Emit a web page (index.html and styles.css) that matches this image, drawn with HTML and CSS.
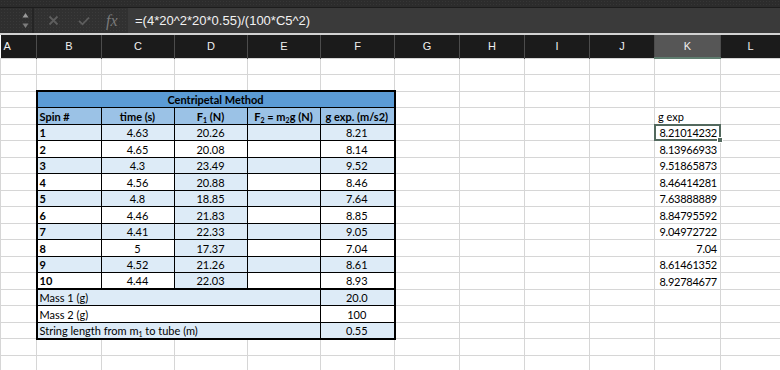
FILE: index.html
```html
<!DOCTYPE html>
<html lang="en">

<head>
    <meta charset="UTF-8">
    <meta name="viewport" content="width=device-width, initial-scale=1.0">
    <title>Centripetal Method</title>
    <link rel="stylesheet" href="styles.css">
</head>

<body>
    <div class="topstrip"></div>
    <div class="formula_bar">
        <div class="namebox">
            <svg width="7" height="18" viewBox="0 0 7 18">
                <path d="M3.5 1 L6.5 5.5 L0.5 5.5 Z" fill="#9a9a9a" />
                <path d="M3.5 16 L6.5 11.5 L0.5 11.5 Z" fill="#7c7c7c" />
            </svg>
        </div>
        <div class="tools">
            <svg class="icon_x" width="11" height="11" viewBox="0 0 11 11">
                <path d="M1.5 1.5 L9.5 9.5 M9.5 1.5 L1.5 9.5" stroke="#5e5e5e" stroke-width="1.8" fill="none" />
            </svg>
            <svg class="icon_check" width="12" height="10" viewBox="0 0 12 10">
                <path d="M1 4.8 L4.5 8.3 L11 1.5" stroke="#5e5e5e" stroke-width="1.8" fill="none" />
            </svg>
            <span class="fx">fx</span>
        </div>
        <div class="formula">=(4*20^2*20*0.55)/(100*C5^2)</div>
    </div>

    <!-- ------------------------------------------------------------------------------------ -->

    <table class="sheet">
        <colgroup>
            <col style="width:36px"><col style="width:65px"><col style="width:73px"><col style="width:73px">
            <col style="width:73px"><col style="width:74px"><col style="width:65px"><col style="width:65px">
            <col style="width:65px"><col style="width:65px"><col style="width:66px"><col style="width:60px">
        </colgroup>
        <thead>
            <tr>
                <th class="col_a">A</th><th>B</th><th>C</th><th>D</th><th>E</th><th>F</th>
                <th>G</th><th>H</th><th>I</th><th>J</th><th class="active">K</th><th>L</th>
            </tr>
        </thead>
        <tbody>
            <tr><td></td><td></td><td></td><td></td><td></td><td></td><td></td><td></td><td></td><td></td><td></td><td></td></tr>
            <tr><td></td><td></td><td></td><td></td><td></td><td></td><td></td><td></td><td></td><td></td><td></td><td></td></tr>
            <tr>
                <td></td>
                <td class="title" colspan="5">Centripetal Method</td>
                <td></td><td></td><td></td><td></td><td></td><td></td>
            </tr>
            <tr>
                <td></td>
                <td class="t l hd">Spin #</td>
                <td class="t hd c">time (s)</td>
                <td class="t hd c">F<sub>1</sub> (N)</td>
                <td class="t hd c">F<sub>2</sub> = m<sub>2</sub>g (N)</td>
                <td class="t r hd c">g exp. (m/s2)</td>
                <td></td><td></td><td></td><td></td><td class="txt">g exp</td><td></td>
            </tr>
            <tr>
                <td></td>
                <td class="t l hl b">1</td><td class="t hl c">4.63</td><td class="t hl c">20.26</td><td class="t hl"></td><td class="t r hl c">8.21</td>
                <td></td><td></td><td></td><td></td><td class="num sel">8.21014232</td><td></td>
            </tr>
            <tr>
                <td></td>
                <td class="t l b">2</td><td class="t c">4.65</td><td class="t c">20.08</td><td class="t"></td><td class="t r c">8.14</td>
                <td></td><td></td><td></td><td></td><td class="num">8.13966933</td><td></td>
            </tr>
            <tr>
                <td></td>
                <td class="t l hl b">3</td><td class="t hl c">4.3</td><td class="t hl c">23.49</td><td class="t hl"></td><td class="t r hl c">9.52</td>
                <td></td><td></td><td></td><td></td><td class="num">9.51865873</td><td></td>
            </tr>
            <tr>
                <td></td>
                <td class="t l b">4</td><td class="t c">4.56</td><td class="t hl c">20.88</td><td class="t"></td><td class="t r c">8.46</td>
                <td></td><td></td><td></td><td></td><td class="num">8.46414281</td><td></td>
            </tr>
            <tr>
                <td></td>
                <td class="t l hl b">5</td><td class="t hl c">4.8</td><td class="t hl c">18.85</td><td class="t hl"></td><td class="t r hl c">7.64</td>
                <td></td><td></td><td></td><td></td><td class="num">7.63888889</td><td></td>
            </tr>
            <tr>
                <td></td>
                <td class="t l b">6</td><td class="t c">4.46</td><td class="t hl c">21.83</td><td class="t"></td><td class="t r c">8.85</td>
                <td></td><td></td><td></td><td></td><td class="num">8.84795592</td><td></td>
            </tr>
            <tr>
                <td></td>
                <td class="t l hl b">7</td><td class="t hl c">4.41</td><td class="t hl c">22.33</td><td class="t hl"></td><td class="t r hl c">9.05</td>
                <td></td><td></td><td></td><td></td><td class="num">9.04972722</td><td></td>
            </tr>
            <tr>
                <td></td>
                <td class="t l b">8</td><td class="t c">5</td><td class="t hl c">17.37</td><td class="t"></td><td class="t r c">7.04</td>
                <td></td><td></td><td></td><td></td><td class="num">7.04</td><td></td>
            </tr>
            <tr>
                <td></td>
                <td class="t l hl b">9</td><td class="t hl c">4.52</td><td class="t hl c">21.26</td><td class="t hl"></td><td class="t r hl c">8.61</td>
                <td></td><td></td><td></td><td></td><td class="num">8.61461352</td><td></td>
            </tr>
            <tr>
                <td></td>
                <td class="t l bot b">10</td><td class="t bot c">4.44</td><td class="t bot hl c">22.03</td><td class="t bot"></td><td class="t r bot c">8.93</td>
                <td></td><td></td><td></td><td></td><td class="num">8.92784677</td><td></td>
            </tr>
            <tr>
                <td></td>
                <td class="t l hl" colspan="4">Mass 1 (g)</td><td class="t r hl c">20.0</td>
                <td></td><td></td><td></td><td></td><td></td><td></td>
            </tr>
            <tr>
                <td></td>
                <td class="t l" colspan="4">Mass 2 (g)</td><td class="t r c">100</td>
                <td></td><td></td><td></td><td></td><td></td><td></td>
            </tr>
            <tr>
                <td></td>
                <td class="t l bot hl" colspan="4">String length from m<sub>1</sub> to tube (m)</td><td class="t r bot hl c">0.55</td>
                <td></td><td></td><td></td><td></td><td></td><td></td>
            </tr>
            <tr><td></td><td></td><td></td><td></td><td></td><td></td><td></td><td></td><td></td><td></td><td></td><td></td></tr>
            <tr><td></td><td></td><td></td><td></td><td></td><td></td><td></td><td></td><td></td><td></td><td></td><td></td></tr>
        </tbody>
    </table>
</body>

</html>
```

FILE: styles.css
```css
body {
    margin: 0;
    width: 780px;
    height: 370px;
    overflow: hidden;
    background: #fff;
    font-family: "Lato", "Liberation Sans", sans-serif;
}

.topstrip {
    height: 7px;
    background-color: #2c2c2c;
    background-image: radial-gradient(#363636 0.6px, transparent 0.8px);
    background-size: 3px 3px;
    border-bottom: 1px solid #1d1d1d;
}

.formula_bar {
    display: flex;
    height: 25px;
    background: #3a3a3a;
    border-bottom: 2px solid #d2d2d2;
}

.namebox {
    width: 34px;
    display: flex;
    align-items: center;
    padding-left: 22px;
    box-sizing: border-box;
    background-color: #2f2f2f;
    background-image: radial-gradient(#393939 0.6px, transparent 0.8px);
    background-size: 3px 3px;
    border-right: 2px solid #252525;
}

.tools {
    width: 94px;
    display: flex;
    align-items: center;
    background-color: #313131;
    background-image: radial-gradient(#3b3b3b 0.6px, transparent 0.8px);
    background-size: 3px 3px;
}

.icon_x {
    margin-left: 14px;
}

.icon_check {
    margin-left: 19px;
}

.fx {
    margin-left: 16px;
    font-family: "Liberation Serif", serif;
    font-style: italic;
    font-size: 16px;
    color: #7a7a7a;
}

.formula {
    flex: 1;
    display: flex;
    align-items: center;
    padding-left: 7px;
    color: #f2f2f2;
    font-family: "Liberation Sans", sans-serif;
    font-size: 13px;
}

/* ---------- sheet ---------- */

.sheet {
    border-collapse: collapse;
    table-layout: fixed;
    width: 780px;
}

.sheet th {
    height: 22px;
    padding: 0;
    background: #1b1b1b;
    color: #f0f0f0;
    font-family: "Liberation Sans", sans-serif;
    font-size: 11px;
    font-weight: normal;
    border-left: 1px solid #4c4c4c;
    border-right: 1px solid #4c4c4c;
}

.sheet th.col_a {
    text-align: left;
    padding-left: 3px;
    border-left: none;
}

.sheet th.active {
    background: #565656;
    border-bottom: 2px solid #5f7d6f;
}

.sheet tbody tr {
    height: 16.5px;
}

.sheet td {
    border: 1px solid #d6d6d6;
    padding: 0 3px 1px;
    vertical-align: bottom;
    line-height: 13px;
    font-size: 11px;
    color: #000;
    white-space: nowrap;
    overflow: hidden;
}

.sheet sub {
    font-size: 7px;
    line-height: 0;
    vertical-align: -2px;
}

.title {
    background: #5b9bd5;
    color: #fff;
    font-weight: bold;
    text-align: center;
    border-top: 2px solid #000 !important;
    border-left: 2px solid #000 !important;
    border-right: 2px solid #000 !important;
    border-bottom: 1px solid #000 !important;
}

.sheet td.t {
    border: 1px solid #000;
    padding-left: 2px;
}

.sheet td.l {
    border-left: 2px solid #000;
}

.sheet td.r {
    border-right: 2px solid #000;
}

.sheet td.bot {
    border-bottom: 2px solid #000;
}

.hl {
    background: #ddebf7;
}

.hd {
    background: #9bc2e6;
    font-weight: bold;
}

.b {
    font-weight: bold;
}

.c {
    text-align: center;
}

.num {
    text-align: right;
    letter-spacing: -0.25px;
}

.txt {
    text-align: left;
}

.sheet td.sel {
    position: relative;
    overflow: visible;
}

.sel::after {
    content: "";
    position: absolute;
    left: -1px;
    top: -1px;
    right: -1px;
    bottom: -1px;
    border: 2px solid #53695e;
}

.sel::before {
    content: "";
    position: absolute;
    right: -3px;
    bottom: -3px;
    width: 4px;
    height: 4px;
    background: #53695e;
    border: 1px solid #fff;
    z-index: 1;
}
```
